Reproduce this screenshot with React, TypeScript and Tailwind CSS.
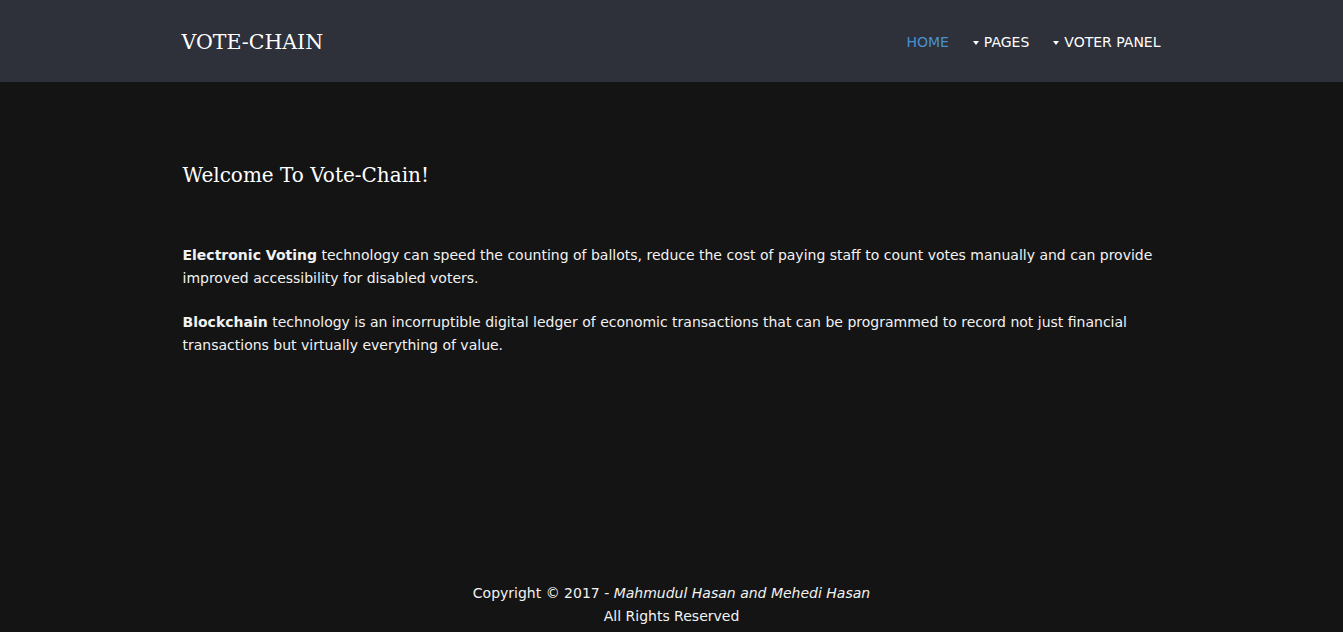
import React from "react";

const Caret = () => (
  <svg width="6" height="4" viewBox="0 0 6 4" className="mr-[5px] mt-[1px]" fill="currentColor">
    <path d="M0 0h6L3 4z" />
  </svg>
);

export default function App() {
  const serif = { fontFamily: "Georgia, 'DejaVu Serif', serif" };
  return (
    <div
      className="min-h-screen flex flex-col bg-[#141414] text-[#f2f2f2]"
      style={{ fontFamily: "Verdana, 'DejaVu Sans', sans-serif" }}
    >
      <header className="h-[82px] bg-[#2e313a]">
        <div className="w-[980px] mx-auto h-full flex items-center justify-between pt-[2px]">
          <div className="text-[20.5px] text-white" style={serif}>
            VOTE-CHAIN
          </div>
          <nav className="flex items-center text-[14px] gap-6 mr-[1px]">
            <a className="text-[#4a90d0]">HOME</a>
            <a className="flex items-center text-white">
              <Caret />
              PAGES
            </a>
            <a className="flex items-center text-white">
              <Caret />
              VOTER PANEL
            </a>
          </nav>
        </div>
      </header>

      <main className="flex-1">
        <div className="w-[980px] mx-auto pt-[79px]">
          <h1 className="text-[20px] text-white leading-[28px] pl-[1px]" style={serif}>
            Welcome To Vote-Chain!
          </h1>
          <div className="mt-[55px] pl-[1px] text-[14px] leading-[23px] space-y-[21px]">
            <p>
              <b>Electronic Voting</b> technology can speed the counting of ballots, reduce the cost of paying staff
              to count votes manually and can provide improved accessibility for disabled voters.
            </p>
            <p>
              <b>Blockchain</b> technology is an incorruptible digital ledger of economic transactions that can be
              programmed to record not just financial transactions but virtually everything of value.
            </p>
          </div>
        </div>
      </main>

      <footer className="text-center text-[14px] leading-[23px] pb-[4px]">
        <p>
          Copyright © 2017 - <i>Mahmudul Hasan and Mehedi Hasan</i>
        </p>
        <p>All Rights Reserved</p>
      </footer>
    </div>
  );
}
